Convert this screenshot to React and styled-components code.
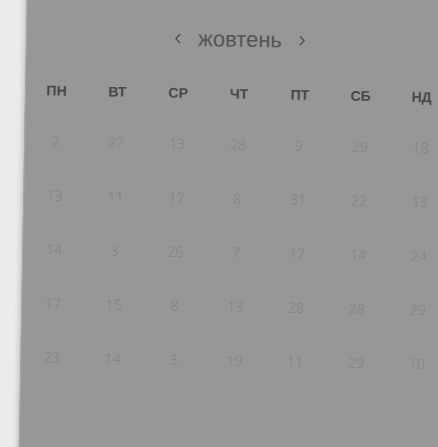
import React from 'react';
import styled, { createGlobalStyle } from 'styled-components';

const GlobalStyle = createGlobalStyle`
  *, *::before, *::after { box-sizing: border-box; }
  body { margin: 0; background: #ebebeb; }
`;

const Page = styled.main`
  display: flex;
  min-height: 100vh;
  overflow: hidden;
`;

const Panel = styled.section`
  flex: 1;
  margin: -20px -22px -20px 27px;
  padding: 36px 6px 36px 0;
  background: #979797;
  border-left: 1px solid #a6a6a6;
  box-shadow: 0 0 7px rgba(0, 0, 0, 0.3);
  transform: rotate(1deg);
  transform-origin: top left;
`;

const MonthBar = styled.header`
  display: flex;
  align-items: center;
  justify-content: center;
  gap: 12px;
  height: 40px;
  margin-bottom: 10px;
`;

const MonthName = styled.h1`
  margin: 0;
  color: #545454;
  font: 400 22px/28px "Liberation Sans", Arial, sans-serif;
`;

const ArrowButton = styled.button`
  display: flex;
  align-items: center;
  justify-content: center;
  width: 16px;
  height: 24px;
  padding: 0;
  border: 0;
  background: none;
  color: #484848;
  cursor: pointer;
`;

const MonthTable = styled.table`
  width: 100%;
  table-layout: fixed;
  border-collapse: collapse;
`;

const WeekdayCell = styled.th`
  height: 48px;
  padding: 0;
  color: #484848;
  text-align: center;
  font: 700 14px/20px "Liberation Sans", Arial, sans-serif;
`;

const DayCell = styled.td`
  height: 54px;
  padding: 0;
  color: #7f7f7f;
  text-align: center;
  font: 300 14px/20px "Open Sans", sans-serif;
`;

const weekdays = ['ПН', 'ВТ', 'СР', 'ЧТ', 'ПТ', 'СБ', 'НД'];

const weeks = [
  [2, 27, 13, 28, 9, 29, 18],
  [13, 11, 17, 8, 31, 22, 13],
  [14, 3, 26, 7, 17, 14, 24],
  [17, 15, 8, 13, 28, 28, 29],
  [23, 14, 3, 19, 11, 29, 10],
];

function Chevron({ path }) {
  return (
    <svg width="8" height="10" viewBox="0 0 8 10" fill="none" stroke="currentColor" strokeWidth="1.3" aria-hidden="true">
      <path d={path} />
    </svg>
  );
}

export default function App() {
  return (
    <>
      <GlobalStyle />
      <Page>
        <Panel>
          <MonthBar>
            <ArrowButton type="button" aria-label="Попередній місяць">
              <Chevron path="M6.2 0.6 L1.8 5 L6.2 9.4" />
            </ArrowButton>
            <MonthName>жовтень</MonthName>
            <ArrowButton type="button" aria-label="Наступний місяць">
              <Chevron path="M1.8 0.6 L6.2 5 L1.8 9.4" />
            </ArrowButton>
          </MonthBar>
          <MonthTable>
            <thead>
              <tr>
                {weekdays.map((name) => (
                  <WeekdayCell key={name} scope="col">{name}</WeekdayCell>
                ))}
              </tr>
            </thead>
            <tbody>
              {weeks.map((week, row) => (
                <tr key={row}>
                  {week.map((day, column) => (
                    <DayCell key={column}>{day}</DayCell>
                  ))}
                </tr>
              ))}
            </tbody>
          </MonthTable>
        </Panel>
      </Page>
    </>
  );
}
